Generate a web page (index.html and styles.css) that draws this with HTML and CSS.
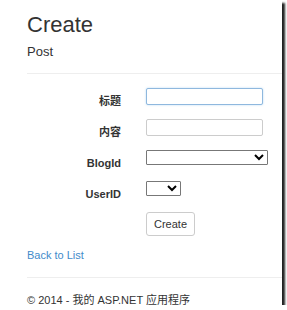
FILE: index.html
```html
<!DOCTYPE html>
<html lang="zh-CN">

<head>
    <meta charset="UTF-8">
    <meta name="viewport" content="width=device-width, initial-scale=1.0">
    <title>Create</title>
    <link rel="stylesheet" href="styles.css">
</head>

<body>
    <div class="frame">
        <div class="container">
            <h2>Create</h2>
            <h4>Post</h4>
            <hr>

            <form class="form-horizontal">
                <div class="form-group">
                    <label for="title">标题</label>
                    <input type="text" id="title" class="form-control focused">
                </div>
                <div class="form-group">
                    <label for="content">内容</label>
                    <input type="text" id="content" class="form-control">
                </div>
                <div class="form-group">
                    <label for="blogId">BlogId</label>
                    <select id="blogId" class="select-wide"></select>
                </div>
                <div class="form-group">
                    <label for="userId">UserID</label>
                    <select id="userId" class="select-small"></select>
                </div>
                <div class="form-group">
                    <span></span>
                    <button type="button">Create</button>
                </div>
            </form>

            <div class="back">
                <a href="#">Back to List</a>
            </div>

            <hr class="footer-line">
            <footer>
                <p>© 2014 - 我的 ASP.NET 应用程序</p>
            </footer>
        </div>
    </div>
</body>

</html>
```

FILE: styles.css
```css
body {
    margin: 0;
    background-color: #fff;
    font-family: "Liberation Sans", Arial, "Noto Sans CJK SC", sans-serif;
    color: #333;
}

.frame {
    width: 282px;
    height: 305px;
    background: #fff;
    overflow: hidden;
    box-shadow: 3px 3px 2px #222;
}

.container {
    padding-left: 27px;
}

h2 {
    margin: 0;
    padding-top: 13px;
    font-size: 22px;
    font-weight: normal;
    line-height: 24px;
}

h4 {
    margin: 7px 0 0;
    font-size: 13px;
    font-weight: normal;
    line-height: 16px;
}

hr {
    margin: 13px 0 0;
    border: 0;
    border-top: 1px solid #eee;
}

.form-horizontal {
    padding-top: 14px;
}

.form-group {
    display: grid;
    grid-template-columns: 94px auto;
    column-gap: 25px;
    align-items: start;
    height: 31px;
}

label {
    text-align: right;
    font-size: 11px;
    font-weight: bold;
    line-height: 13px;
    padding-top: 7px;
}

.form-control {
    box-sizing: border-box;
    width: 117px;
    height: 17px;
    margin: 0;
    padding: 0 4px;
    border: 1px solid #ccc;
    border-radius: 2px;
    font-size: 11px;
}

.focused {
    border-color: #8fb8de;
    box-shadow: 0 0 2px rgba(102, 175, 233, 0.5);
}

select {
    box-sizing: border-box;
    margin: 0;
    height: 15px;
    border: 1px solid #777;
    border-radius: 1px;
    background: #fff;
    font-size: 10px;
}

.select-wide {
    width: 122px;
}

.select-small {
    width: 35px;
}

button {
    box-sizing: border-box;
    width: 49px;
    height: 24px;
    padding: 0;
    background-color: #fff;
    color: #333;
    border: 1px solid #ccc;
    border-radius: 3px;
    font-family: inherit;
    font-size: 11px;
}

.back {
    margin-top: 6px;
    font-size: 11px;
    line-height: 13px;
}

.back a {
    color: #428bca;
    text-decoration: none;
}

.footer-line {
    margin-top: 15px;
}

footer p {
    margin: 16px 0 0;
    font-size: 11px;
    line-height: 13px;
}
```
